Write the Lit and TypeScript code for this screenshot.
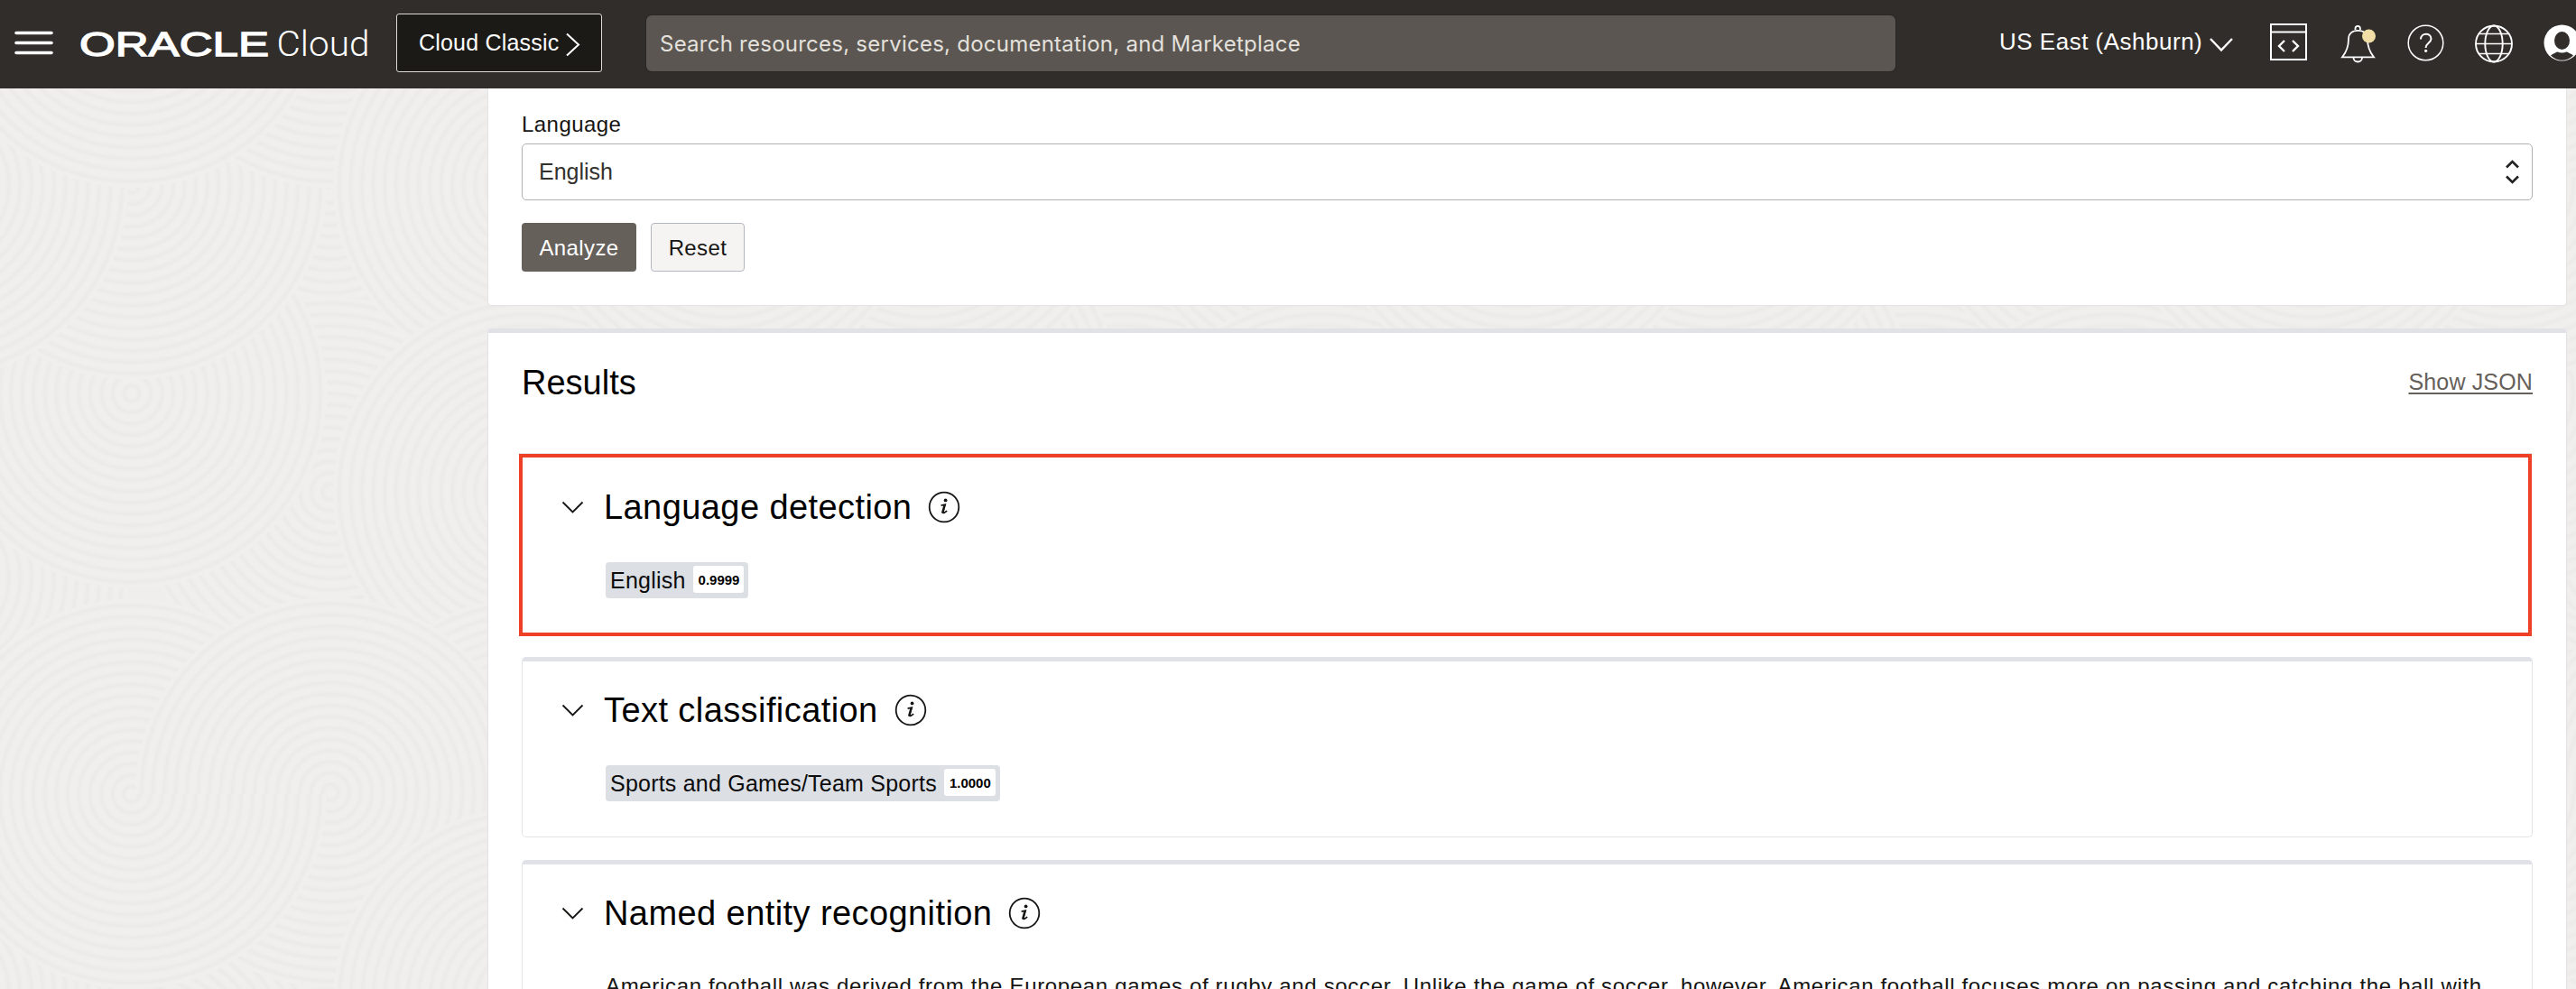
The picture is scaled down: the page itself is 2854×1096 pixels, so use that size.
import { LitElement, html, css, svg } from "lit";
import { customElement, property } from "lit/decorators.js";

const CIRCLES: number[][] = [
  [366, 216], [-74, 640], [366, 1180], [146, 1200], [-74, 1100],
  [366, 545], [146, 436], [146, 205], [-74, 205], [366, -8], [146, -8], [585, 205],
  [585, 545], [585, 878], [146, 880], [366, 878], [585, 1110],
];

@customElement("swirl-backdrop")
class SwirlBackdrop extends LitElement {
  static styles = css`
    :host { display: block; }
    .canvas { display: block; width: 100%; height: 100%; }
  `;
  render() {
    return html`<svg class="canvas" viewBox="0 0 2854 1096" preserveAspectRatio="xMinYMin slice">
      <defs>
        <radialGradient id="ring" cx="0.5" cy="0.5" r="0.029" spreadMethod="repeat">
          <stop offset="0" stop-color="#f0efed" />
          <stop offset="0.35" stop-color="#f0efed" />
          <stop offset="0.7" stop-color="#ebeae8" />
          <stop offset="1" stop-color="#f0efed" />
        </radialGradient>
        <clipPath id="lower"><rect x="-80" y="880" width="460" height="216" /></clipPath>
      </defs>
      <rect width="2854" height="1096" fill="#efeeec" />
      ${[0, 878, 1756, 2634].map((dx) => svg`<g transform="translate(${dx} 0)">
        ${CIRCLES.map(([x, y]) => svg`<circle cx=${x} cy=${y} r="216" fill="url(#ring)" />`)}
        <circle cx="146" cy="880" r="216" fill="url(#ring)" clip-path="url(#lower)" />
      </g>`)}
    </svg>`;
  }
}

@customElement("result-card")
class ResultCard extends LitElement {
  @property() heading = "";
  @property() label = "";
  @property() score = "";
  @property() text = "";
  @property({ type: Boolean, reflect: true }) highlighted = false;

  static styles = css`
    :host {
      display: block; box-sizing: border-box; height: 200px; background: #fff;
      border: 1px solid #e2e3e7; border-top: 5px solid #e1e2e7; border-radius: 5px;
      padding: 38px 43px 0; flex: none;
    }
    :host([highlighted]) {
      margin: 0 1px 0 -3px; height: 202px; border: 4px solid #ee4027; border-radius: 0;
      padding: 39px 43px 0; box-shadow: 0 -1px 0 #e3e6ea;
    }
    .head { display: flex; align-items: center; height: 32px; }
    .chevron { width: 25px; height: 14px; flex: none; margin-right: 22px; }
    .title { font-size: 38px; line-height: 44px; color: #000; letter-spacing: 0.42px; white-space: nowrap; margin: 0; font-weight: 400; }
    .info { width: 36px; height: 36px; margin-left: 18px; flex: none; }
    .tag {
      display: inline-flex; align-items: flex-start; box-sizing: border-box; height: 40px; margin: 45px 0 0 49px;
      padding: 4px 5px 0 5px; background: #dcdfe4; border-radius: 4px;
    }
    .label { font-size: 25px; line-height: 32px; letter-spacing: 0.22px; color: #0c0c0c; margin-right: 8px; white-space: nowrap; }
    .score {
      height: 30px; line-height: 31px; padding: 0 5px 0 6px; background: #fff; border-radius: 3px;
      font-size: 15px; font-weight: 700; color: #000;
    }
    .text { margin: 47px 0 0 49px; font-size: 24px; line-height: 36px; letter-spacing: 0.665px; color: #161513; white-space: nowrap; }
  `;
  render() {
    return html`
      <div class="head">
        <svg class="chevron" viewBox="0 0 25 14"><path d="M1.5 1.5 12.5 12.5 23.5 1.5" fill="none" stroke="#161513" stroke-width="1.8" /></svg>
        <h2 class="title">${this.heading}</h2>
        <svg class="info" viewBox="0 0 36 36">
          <circle cx="18" cy="18" r="16.3" fill="none" stroke="#161513" stroke-width="1.8" />
          <circle cx="19.6" cy="10.4" r="1.9" fill="#161513" />
          <path d="M14.6 16.2 19.2 15.2 16.8 23.6C16.5 25 18.2 24.7 21.2 22.2" fill="none" stroke="#161513" stroke-width="1.7" />
          <path d="M18.6 15.4 16 24.6" stroke="#161513" stroke-width="2.2" />
        </svg>
      </div>
      ${this.label
        ? html`<div class="tag"><span class="label">${this.label}</span><span class="score">${this.score}</span></div>`
        : html`<div class="text">${this.text}</div>`}
    `;
  }
}

@customElement("app-root")
class AppRoot extends LitElement {
  static styles = css`
    :host {
      display: block; position: relative; width: 100%; height: 1096px; overflow: hidden;
      font-family: "Liberation Sans", Arial, sans-serif; color: #161513; font-kerning: normal;
    }
    .backdrop { position: absolute; inset: 0; }
    .page { position: relative; display: flex; flex-direction: column; height: 1096px; }
    .bar { display: flex; align-items: center; height: 98px; flex: none; background: #312d2a; box-sizing: border-box; padding-left: 16px; overflow: hidden; }
    .menu { display: block; width: 43px; height: 27px; flex: none; margin: -4px 26px 0 0; }
    .logo { display: block; width: 330px; height: 50px; flex: none; margin: -2px 24px 0 0; }
    .classic {
      display: flex; align-items: center; box-sizing: border-box; width: 228px; height: 65px; flex: none; margin-top: -3px;
      background: #1b1a16; border: 1px solid #dedbd7; border-radius: 3px; padding-left: 24px; color: #fff;
      font-size: 25px; letter-spacing: 0.2px; white-space: nowrap;
    }
    .classic-arrow { width: 18px; height: 27px; margin: 4px 0 0 7px; flex: none; }
    .search {
      display: flex; align-items: center; box-sizing: border-box; width: 1384px; height: 62px; flex: none; margin: -2px 0 0 49px;
      background: #5b5651; border-radius: 6px; box-shadow: 0 0 0 1px #2a2623; padding: 1px 0 0 15px;
      font-family: Inter, "Liberation Sans", sans-serif; font-size: 24px; letter-spacing: 0.245px; color: #e4e1dd; white-space: nowrap;
    }
    .region { margin: -5px 0 0 115px; font-size: 26px; letter-spacing: 0.5px; color: #fff; white-space: nowrap; width: 226px; flex: none; }
    .region-arrow { width: 28px; height: 18px; margin: 1px 0 0 6px; flex: none; }
    .tools { display: block; width: 350px; height: 50px; margin: -4px 0 0 35px; flex: none; }

    .content { display: flex; flex-direction: column; gap: 25px; margin: 0 10px 0 540px; flex: 1; min-height: 0; }
    .form-panel {
      box-sizing: border-box; height: 241px; flex: none; background: #fff; border: 1px solid #e3e3e6; border-top: 0;
      border-radius: 0 0 5px 5px; padding: 25px 37px 0; 
    }
    .field-label { display: block; font-size: 24px; line-height: 30px; letter-spacing: 0.45px; height: 36px; }
    .select {
      display: flex; align-items: center; justify-content: space-between; box-sizing: border-box; height: 63px;
      border: 1px solid #b3b1ae; border-radius: 5px; padding: 0 13px 0 18px; font-size: 25px; color: #33312e;
    }
    .updown { width: 17px; height: 27px; }
    .actions { display: flex; gap: 16px; margin-top: 25px; }
    .btn { box-sizing: border-box; height: 54px; border-radius: 4px; font: inherit; font-size: 24px; letter-spacing: 0.4px; padding: 1px 0 0; text-align: center; }
    .primary { width: 127px; background: #66605b; color: #fff; border: 0; }
    .secondary { width: 104px; background: #f5f4f2; color: #161513; border: 1px solid #b3b7c2; }
    .results-panel {
      box-sizing: border-box; flex: none; height: 760px; background: #fff; border: 1px solid #e1e2e7; border-top: 5px solid #e1e2e7;
      border-radius: 5px 5px 0 0; padding: 32px 37px 0;
    }
    .results-head { display: flex; align-items: flex-start; justify-content: space-between; height: 102px; }
    .results-title { margin: 0; font-size: 38px; line-height: 46px; font-weight: 400; color: #000; }
    .json-link { font-size: 25px; line-height: 45px; letter-spacing: 0.15px; color: #66605b; text-decoration: underline; text-decoration-thickness: 2px; text-underline-offset: 3px; }
    .cards { display: flex; flex-direction: column; gap: 25px; }
    .cards > result-card:first-child { margin-bottom: -2px; }
  `;
  render() {
    return html`
      <swirl-backdrop class="backdrop"></swirl-backdrop>
      <div class="page">
        <header class="bar">
          <svg class="menu" viewBox="0 0 43 27"><path d="M2 2.5h39M2 13.5h39M2 24.5h39" stroke="#fff" stroke-width="3.6" stroke-linecap="round" /></svg>
          <svg class="logo" viewBox="0 0 330 50" role="img">
            <text x="3" y="39" font-family="Liberation Sans, Arial, sans-serif" font-size="37" fill="#fff" stroke="#fff" stroke-width="1.3" textLength="210" lengthAdjust="spacingAndGlyphs">ORACLE</text>
            <text x="221.500" y="39" font-family="Roboto, sans-serif" font-weight="300" font-size="39" fill="#fff" textLength="103" lengthAdjust="spacingAndGlyphs">Cloud</text>
          </svg>
          <div class="classic">Cloud Classic
            <svg class="classic-arrow" viewBox="0 0 18 27"><path d="M2 1.5 15 13.5 2 25.5" fill="none" stroke="#fff" stroke-width="2" /></svg>
          </div>
          <div class="search">Search resources, services, documentation, and Marketplace</div>
          <div class="region">US East (Ashburn)</div>
          <svg class="region-arrow" viewBox="0 0 28 18"><path d="M2 2 14 14.5 26 2" fill="none" stroke="#fff" stroke-width="2.4" /></svg>
          <svg class="tools" viewBox="2510 22 350 50" fill="none" stroke="#fff">
            <path d="M2516 27h39v39h-39zM2516 35.5h39" stroke-width="2" />
            <path d="M2531 45l-6 6 6 6M2540 45l6 6-6 6" stroke-width="2.3" />
            <path d="M2595 63.3h35c-5-6-7-12-7-20 0-6-4-9.500-10.500-9.500s-10.500 3.500-10.500 9.500c0 8-2 14-7 20z" stroke-width="1.800" />
            <path d="M2609.500 33v-1.500a2.700 2.700 0 0 1 5.400 0V33M2607.500 64c0 6 9.500 6 9.500 0" stroke-width="1.800" />
            <circle cx="2624.500" cy="40" r="7.500" fill="#f1dda5" stroke="none" />
            <circle cx="2687.500" cy="47.500" r="19.300" stroke-width="1.500" />
            <path d="M2682 43.500c0-7.500 11.500-7.500 11.500-.5 0 4.500-5.900 4.500-5.900 10" stroke-width="2" />
            <circle cx="2687.600" cy="56.300" r="1.600" fill="#fff" stroke="none" />
            <circle cx="2763" cy="48.500" r="20" stroke-width="1.900" />
            <ellipse cx="2763" cy="48.500" rx="9.700" ry="20" stroke-width="1.900" />
            <path d="M2743 48.500h40M2747 37.500h32M2747 59.500h32" stroke-width="1.700" />
            <circle cx="2838.500" cy="47.500" r="20" fill="#fff" stroke="none" />
            <path d="M2826 61.500c2.500-2 6-3.500 8.500-4.500h8c2.500 1 6 2.500 8.500 4.500-7 7-18 7-25 0z" fill="#312d2a" stroke="none" />
            <ellipse cx="2838.500" cy="45" rx="8.500" ry="10" fill="#312d2a" stroke="none" />
            <path d="M2833.500 56.500c3 1.500 7 1.500 10 0" stroke-width="1.400" />
          </svg>
        </header>
        <main class="content">
          <section class="form-panel">
            <label class="field-label">Language</label>
            <div class="select">English
              <svg class="updown" viewBox="0 0 17 27"><path d="M2 8.500 8.500 2 15 8.500M2 18.500 8.500 25 15 18.500" fill="none" stroke="#222" stroke-width="2.600" /></svg>
            </div>
            <div class="actions">
              <button class="btn primary">Analyze</button>
              <button class="btn secondary">Reset</button>
            </div>
          </section>
          <section class="results-panel">
            <div class="results-head">
              <h1 class="results-title">Results</h1>
              <a class="json-link">Show JSON</a>
            </div>
            <div class="cards">
              <result-card highlighted heading="Language detection" label="English" score="0.9999"></result-card>
              <result-card heading="Text classification" label="Sports and Games/Team Sports" score="1.0000"></result-card>
              <result-card
                heading="Named entity recognition"
                text="American football was derived from the European games of rugby and soccer. Unlike the game of soccer, however, American football focuses more on passing and catching the ball with"
              ></result-card>
            </div>
          </section>
        </main>
      </div>
    `;
  }
}
